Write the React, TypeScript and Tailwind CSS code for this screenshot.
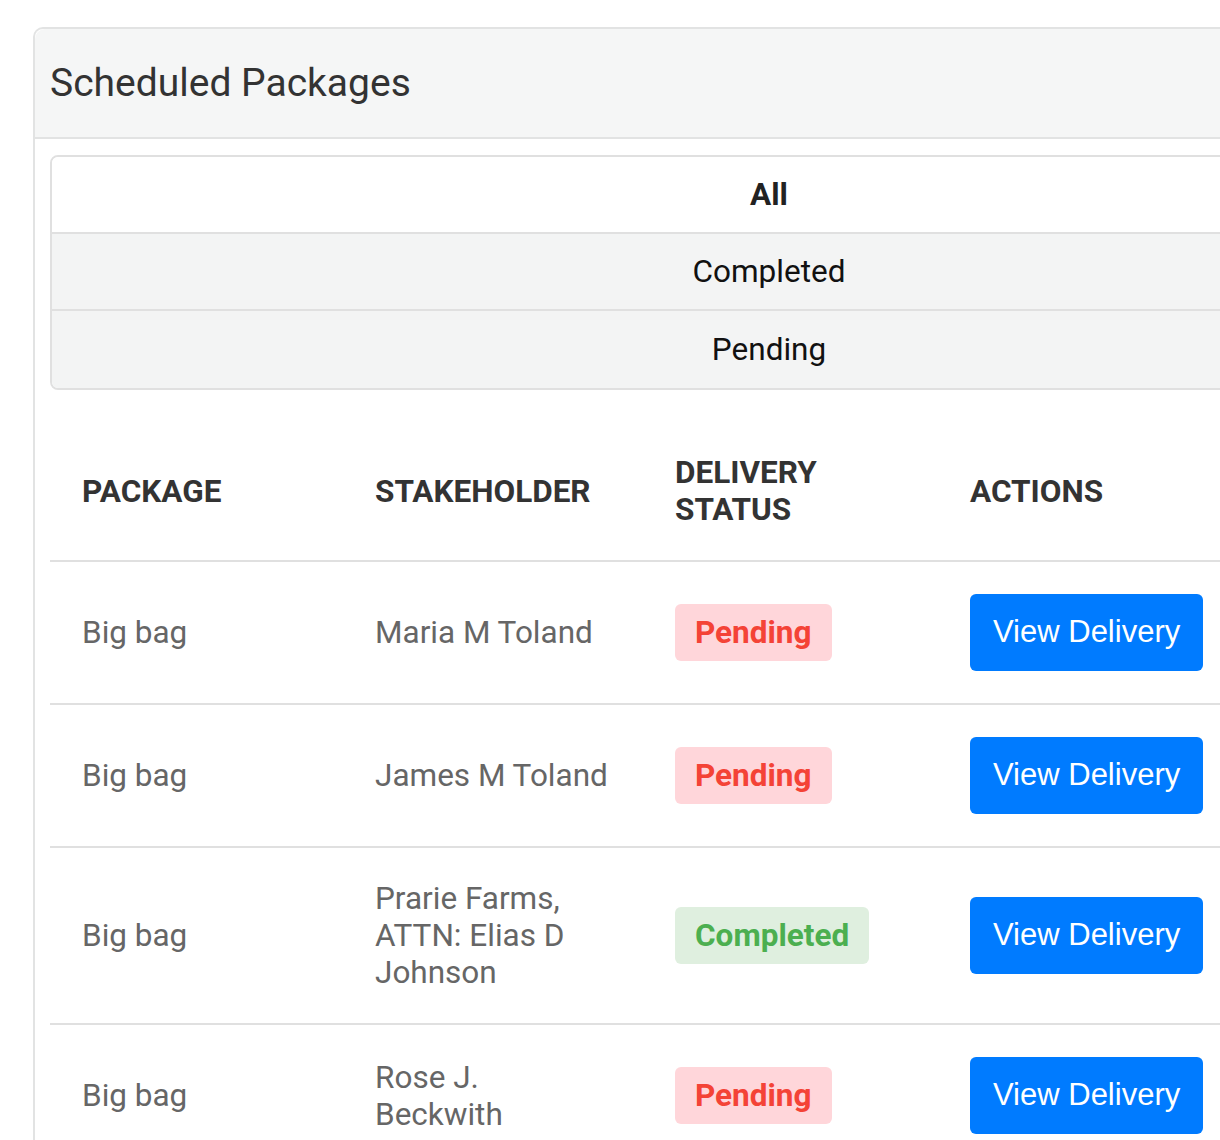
const rows = [
  { pkg: 'Big bag', who: ['Maria M Toland'], status: 'Pending' },
  { pkg: 'Big bag', who: ['James M Toland'], status: 'Pending' },
  { pkg: 'Big bag', who: ['Prarie Farms,', 'ATTN: Elias D', 'Johnson'], status: 'Completed' },
  { pkg: 'Big bag', who: ['Rose J.', 'Beckwith'], status: 'Pending' },
];

const StatusBadge = ({ status }: { status: string }) => {
  if (status === 'Completed') {
    return (
      <span className="inline-block rounded-md bg-[#dfefdf] px-5 py-[10px] text-[31.5px] font-bold leading-[37px] text-[#4caf50]">
        Completed
      </span>
    );
  }
  return (
    <span className="inline-block rounded-md bg-[#ffd6da] px-5 py-[10px] text-[31.5px] font-bold leading-[37px] text-[#f44336]">
      Pending
    </span>
  );
};

export default function App() {
  return (
    <div className="h-[1140px] w-[1220px] overflow-hidden bg-white font-['Roboto',sans-serif]">
      <div className="ml-[33px] mt-[27px] w-[1470px] rounded-tl-[10px] border-l-2 border-t-2 border-[#e2e3e3]">
        <div className="flex h-[110px] items-center rounded-tl-[10px] border-b-2 border-[#e2e3e3] bg-[#f5f6f6] pl-[15px]">
          <h1 className="text-[39px] leading-none text-[#333]">Scheduled Packages</h1>
        </div>
        <div className="px-[15px] pt-[16px]">
          <ul className="overflow-hidden rounded-lg border-2 border-[#e0e0e0]">
            <li className="flex h-[77px] items-center justify-center border-b-2 border-[#e0e0e0] bg-white text-[31.5px] font-bold text-[#222]">
              All
            </li>
            <li className="flex h-[77px] items-center justify-center border-b-2 border-[#e0e0e0] bg-[#f3f4f4] text-[31.5px] text-[#111]">
              Completed
            </li>
            <li className="flex h-[77px] items-center justify-center bg-[#f3f4f4] text-[31.5px] text-[#111]">
              Pending
            </li>
          </ul>
          <table className="mt-[32px] w-full border-collapse text-left">
            <thead>
              <tr className="border-b-2 border-[#e0e0e0]">
                <th className="w-[293px] p-[32px] text-[31.5px] font-bold leading-[37px] text-[#333]">PACKAGE</th>
                <th className="w-[300px] p-[32px] text-[31.5px] font-bold leading-[37px] text-[#333]">STAKEHOLDER</th>
                <th className="w-[295px] p-[32px] text-[31.5px] font-bold leading-[37px] text-[#333]">
                  DELIVERY
                  <br />
                  STATUS
                </th>
                <th className="p-[32px] text-[31.5px] font-bold leading-[37px] text-[#333]">ACTIONS</th>
              </tr>
            </thead>
            <tbody>
              {rows.map((r, i) => (
                <tr key={i} className="border-b-2 border-[#e0e0e0]">
                  <td className="p-[32px] align-middle text-[31.5px] leading-[37px] text-[#666]">{r.pkg}</td>
                  <td className="p-[32px] align-middle text-[31.5px] leading-[37px] text-[#666]">
                    {r.who.map((w, j) => (
                      <div key={j}>{w}</div>
                    ))}
                  </td>
                  <td className="p-[32px] align-middle">
                    <StatusBadge status={r.status} />
                  </td>
                  <td className="p-[32px] align-middle">
                    <button className="h-[77px] rounded-md bg-[#007bff] px-[23px] font-['Liberation_Sans',sans-serif] text-[31px] text-white">
                      View Delivery
                    </button>
                  </td>
                </tr>
              ))}
            </tbody>
          </table>
        </div>
      </div>
    </div>
  );
}
